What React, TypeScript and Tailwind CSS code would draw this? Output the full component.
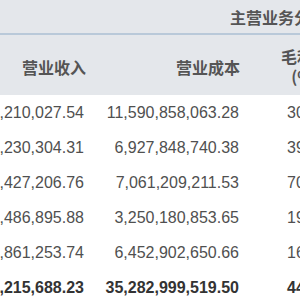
import React from "react";

const rows = [
  ["16,579,210,027.54", "11,590,858,063.28", "30.09"],
  ["11,389,230,304.31", "6,927,848,740.38", "39.17"],
  ["23,576,427,206.76", "7,061,209,211.53", "70.05"],
  ["4,020,486,895.88", "3,250,180,853.65", "19.16"],
  ["7,685,861,253.74", "6,452,902,650.66", "16.04"],
];

const num = "font-['Liberation_Sans',Arial,sans-serif] text-[16px] leading-none";
const cjk = "font-['Noto_Sans_CJK_SC','Noto_Sans',sans-serif]";

export default function App() {
  return (
    <div className="w-[300px] h-[300px] overflow-hidden bg-white">
      <div className="bg-[#e4e7eb]">
        <div className={`h-[33px] flex items-center pl-[230px] whitespace-nowrap text-[16px] font-bold text-[#555] ${cjk}`}>
          主营业务分产品情况
        </div>
        <div className="h-[2px] bg-[#b9c9d9]" />
        <div className={`h-[60px] flex items-center whitespace-nowrap text-[16px] font-bold text-[#555] ${cjk}`}>
          <div className="w-[86px] shrink-0 flex justify-end pt-[4px]">营业收入</div>
          <div className="w-[154px] shrink-0 flex justify-end pt-[4px]">营业成本</div>
          <div className="shrink-0 pl-[41px] flex flex-col items-center leading-[20px] pt-[2px]">
            <span>毛利率</span>
            <span>(%)</span>
          </div>
        </div>
      </div>
      <div className="text-[#505050]">
        {rows.map((r, i) => (
          <div key={i} className={`h-[35px] flex items-center whitespace-nowrap ${num}`}>
            <div className="w-[84px] shrink-0 flex justify-end">{r[0]}</div>
            <div className="w-[155px] shrink-0 flex justify-end">{r[1]}</div>
            <div className="shrink-0 pl-[48px]">{r[2]}</div>
          </div>
        ))}
        <div className={`h-[35px] flex items-center whitespace-nowrap font-bold text-[#333] ${num}`}>
          <div className="w-[84px] shrink-0 flex justify-end">63,033,215,688.23</div>
          <div className="w-[155px] shrink-0 flex justify-end">35,282,999,519.50</div>
          <div className="shrink-0 pl-[48px]">44.03</div>
        </div>
      </div>
    </div>
  );
}
